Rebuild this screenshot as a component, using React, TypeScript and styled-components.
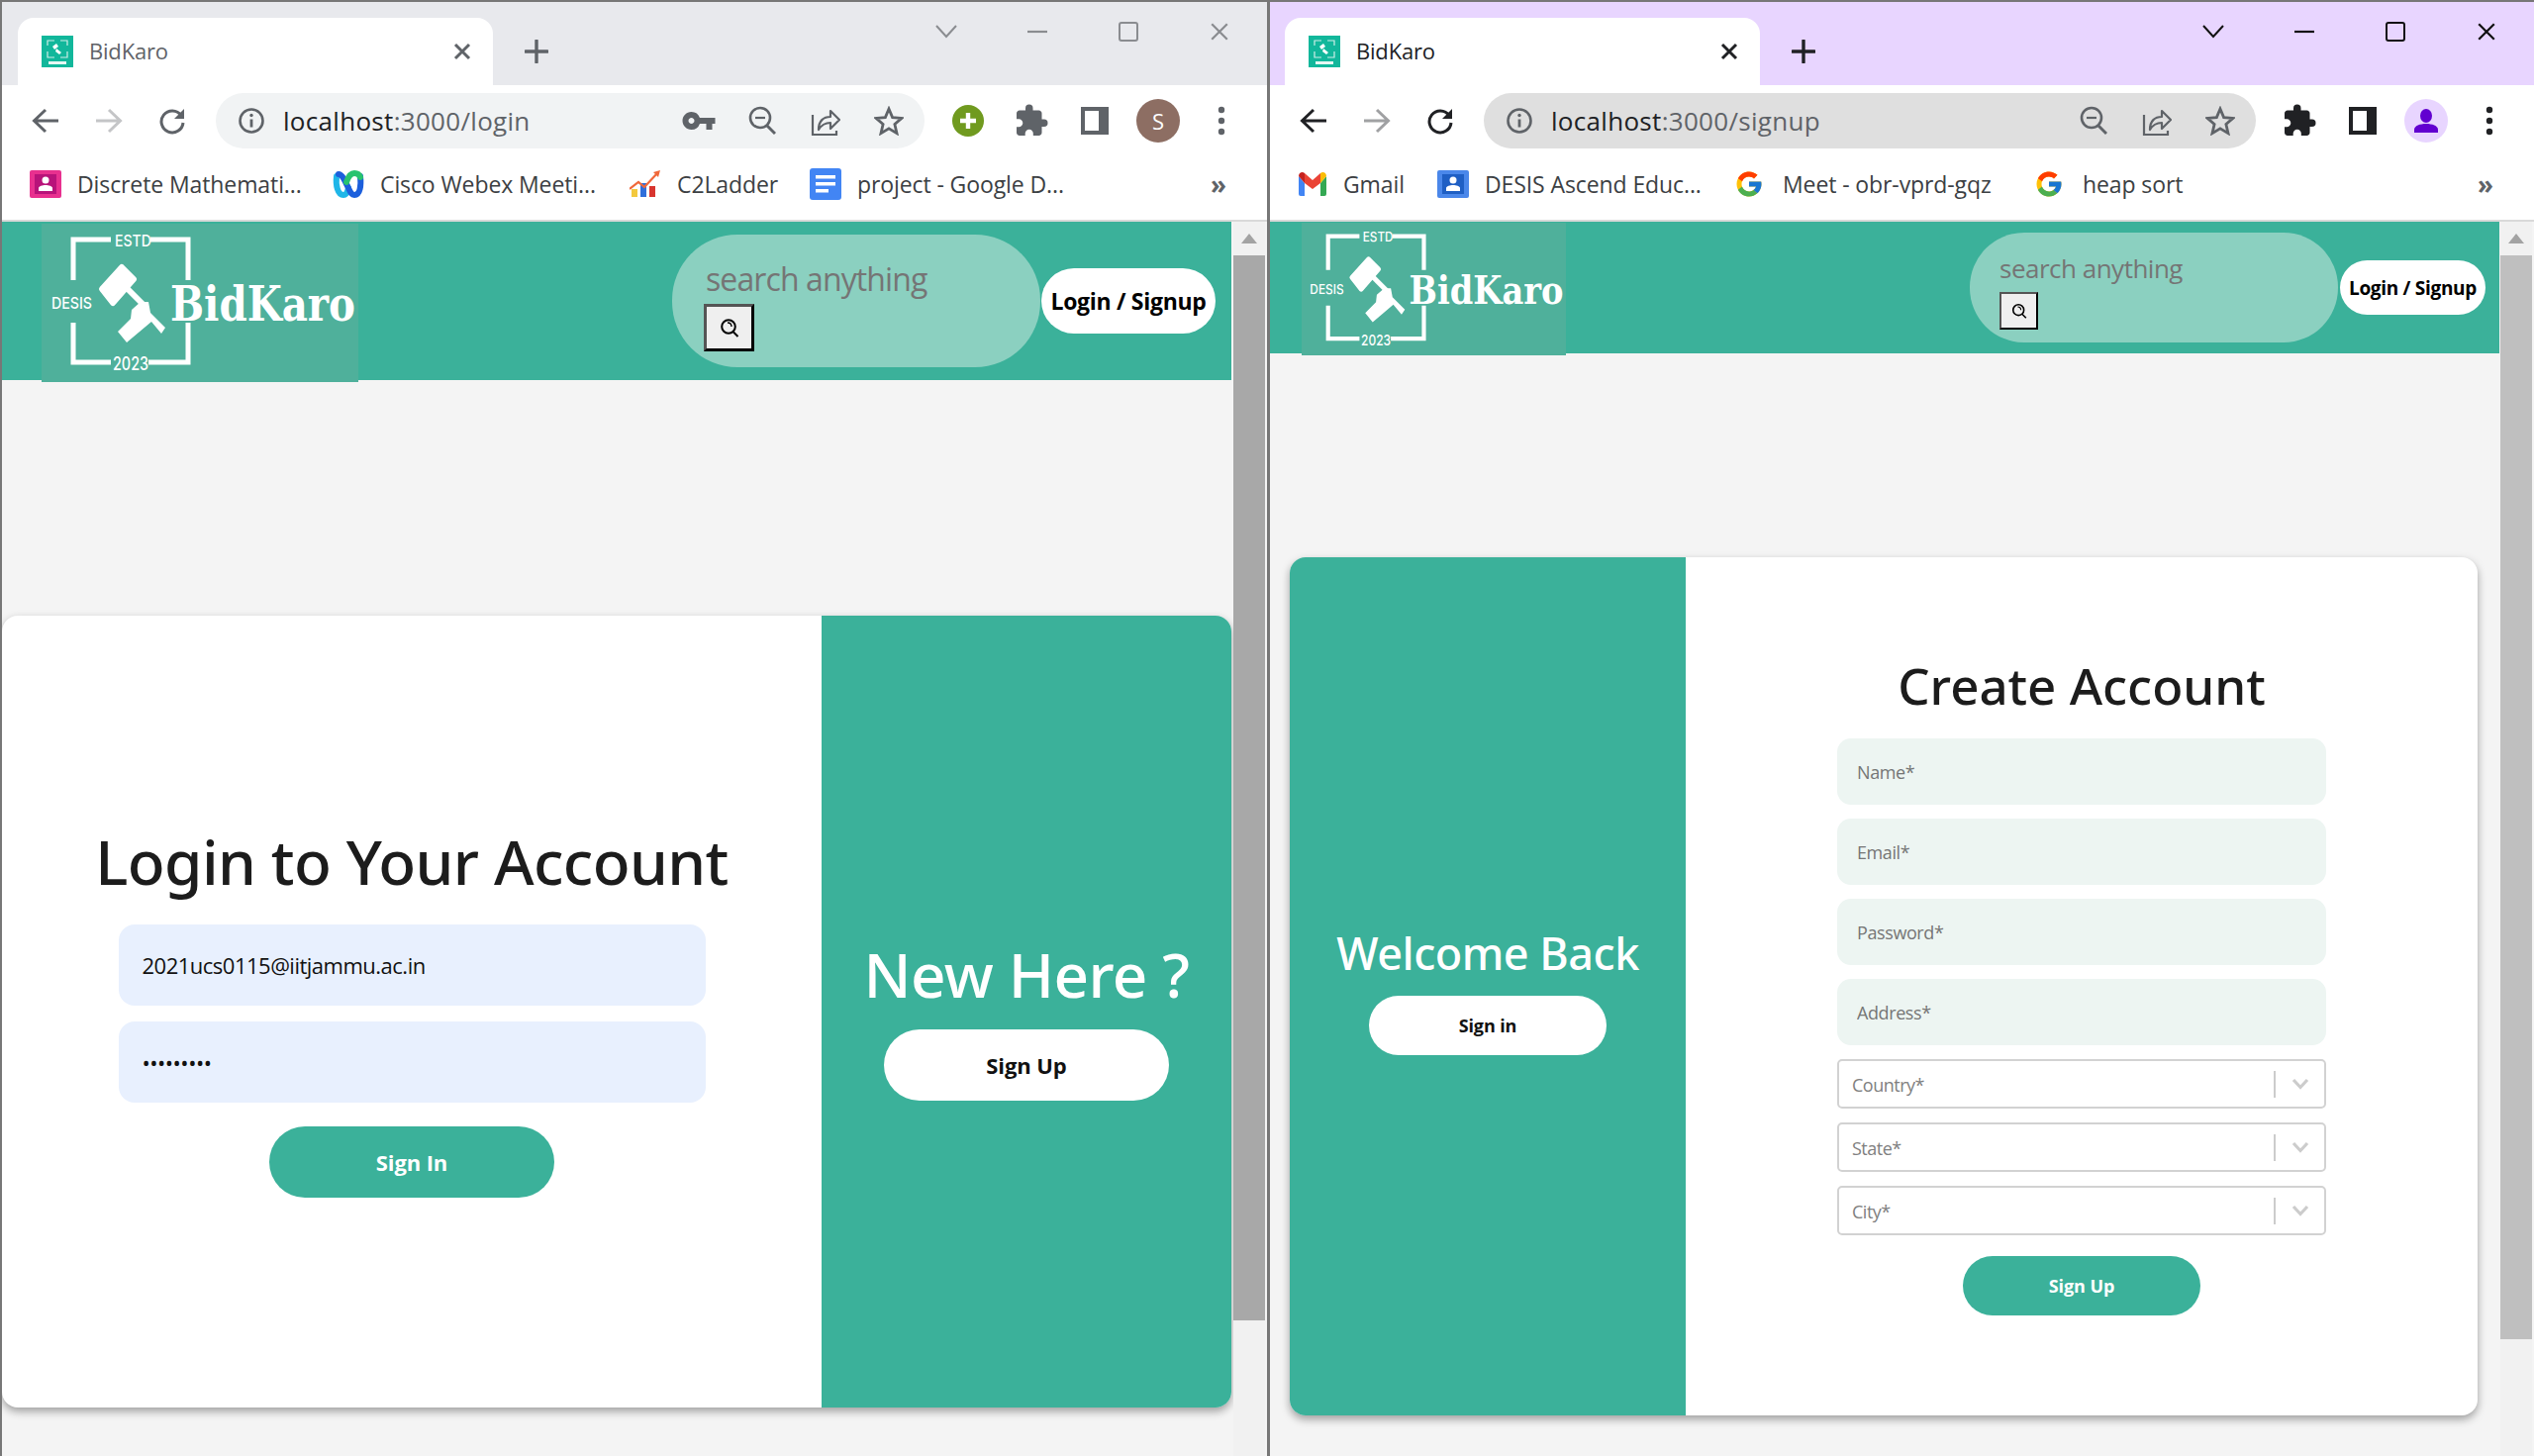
import React from 'react';
import styled, { createGlobalStyle } from 'styled-components';
import { MdExtension, MdVpnKey } from 'react-icons/md';
import { FcGoogle } from 'react-icons/fc';

const TEAL = '#3bb19a';

const GlobalStyle = createGlobalStyle`
  html, body {
    margin: 0;
    padding: 0;
    overflow: hidden;
    background: #fff;
    font-family: "Open Sans", "Noto Sans", sans-serif;
  }
  * { box-sizing: border-box; }
`;

const Desktop = styled.div`
  width: 2560px;
  height: 1471px;
  display: flex;
`;

const Win = styled.div<{ $active?: boolean }>`
  width: 1280px;
  height: 1471px;
  display: flex;
  flex-direction: column;
  flex: none;
  border-top: 2px solid #777;
  border-left: ${(p) => (p.$active ? 3 : 2)}px solid #777;
  overflow: hidden;
`;

const TabStrip = styled.div<{ $active?: boolean }>`
  height: 84px;
  flex: none;
  display: flex;
  align-items: flex-start;
  padding: 16px 0 0 ${(p) => (p.$active ? 15 : 16)}px;
  background: ${(p) => (p.$active ? '#e8d5ff' : '#e8e9ed')};
  color: ${(p) => (p.$active ? '#202124' : '#5f6368')};
`;

const Tab = styled.div`
  width: 480px;
  height: 68px;
  background: #fff;
  border-radius: 16px 16px 0 0;
  display: flex;
  align-items: center;
  padding: 0 22px 0 24px;
`;

const TabTitle = styled.span<{ $active?: boolean }>`
  margin: -2px 0 0 16px;
  font-size: 22px;
  letter-spacing: -0.2px;
  flex: 1;
  color: ${(p) => (p.$active ? '#202124' : '#5f6368')};
`;

const NewTab = styled.div`
  width: 88px;
  height: 68px;
  display: flex;
  align-items: center;
  justify-content: center;
`;

const WinControls = styled.div`
  margin-left: auto;
  margin-right: 2px;
  display: flex;
  width: 368px;
  height: 30px;
  margin-top: -1px;
  align-items: center;
`;

const ControlSlot = styled.div`
  width: 92px;
  display: flex;
  justify-content: center;
`;

const Toolbar = styled.div`
  height: 72px;
  flex: none;
  display: flex;
  align-items: center;
  padding-left: 12px;
  background: #fff;
`;

const IconSlot = styled.div`
  width: 64px;
  height: 56px;
  flex: none;
  display: flex;
  align-items: center;
  justify-content: center;
`;

const Omnibox = styled.div<{ $active?: boolean }>`
  width: ${(p) => (p.$active ? 780 : 716)}px;
  height: 56px;
  flex: none;
  margin: 0 12px;
  border-radius: 28px;
  display: flex;
  align-items: center;
  padding: 0 4px;
  background: ${(p) => (p.$active ? '#dfdfdf' : '#f1f3f4')};
`;

const Url = styled.div`
  flex: 1;
  font-size: 26px;
  letter-spacing: 0.3px;
  color: #5f6368;
`;

const UrlHost = styled.span`
  color: #202124;
`;

const Bookmarks = styled.div`
  height: 66px;
  flex: none;
  display: flex;
  align-items: center;
  padding: 0 0 8px 28px;
  background: #fff;
  border-bottom: 2px solid #d9d9d9;
`;

const Bookmark = styled.div<{ $w: number; $gap?: number }>`
  width: ${(p) => p.$w}px;
  flex: none;
  display: flex;
  align-items: center;
  gap: ${(p) => p.$gap ?? 16}px;
  color: #3c4043;
  font-size: 23px;
  letter-spacing: -0.1px;
  white-space: nowrap;
`;

const MoreChevrons = styled.div`
  margin-left: auto;
  margin-right: 41px;
  font-size: 26px;
  line-height: 26px;
  font-weight: 700;
  color: #5f6368;
`;

const Page = styled.div`
  flex: 1;
  display: flex;
  min-height: 0;
  background: #f4f4f4;
`;

const Main = styled.div`
  width: 1242px;
  flex: none;
  display: flex;
  flex-direction: column;
`;

const Header = styled.div<{ $small?: boolean }>`
  height: ${(p) => (p.$small ? 133 : 160)}px;
  flex: none;
  display: flex;
  align-items: flex-start;
  background: ${TEAL};
`;

const LogoBox = styled.div<{ $small?: boolean }>`
  width: ${(p) => (p.$small ? 267 : 320)}px;
  height: ${(p) => (p.$small ? 134 : 160)}px;
  margin: ${(p) => (p.$small ? '1px 0 0 32px' : '2px 0 0 40px')};
  flex: none;
  background: #4fb09b;
  position: relative;
  z-index: 1;
`;

const SearchPill = styled.div<{ $small?: boolean }>`
  width: 372px;
  height: ${(p) => (p.$small ? 111 : 134)}px;
  margin: ${(p) => (p.$small ? '11px 0 0 408px' : '13px 0 0 317px')};
  padding: ${(p) => (p.$small ? '16px 0 0 30px' : '21px 0 0 32px')};
  flex: none;
  background: #8bd0c0;
  border-radius: ${(p) => (p.$small ? 55 : 66)}px;
`;

const SearchInput = styled.input<{ $small?: boolean }>`
  display: block;
  width: 300px;
  height: ${(p) => (p.$small ? 40 : 46)}px;
  padding: 0 0 0 ${(p) => (p.$small ? 0 : 2)}px;
  border: 0;
  outline: 0;
  background: transparent;
  font-family: inherit;
  font-size: ${(p) => (p.$small ? 26 : 32)}px;
  letter-spacing: ${(p) => (p.$small ? -0.5 : -0.9)}px;
  &::placeholder {
    color: #757575;
    opacity: 1;
  }
`;

const SearchButton = styled.button<{ $small?: boolean }>`
  display: flex;
  align-items: center;
  justify-content: center;
  padding: 0;
  width: ${(p) => (p.$small ? 39 : 51)}px;
  height: ${(p) => (p.$small ? 38 : 48)}px;
  margin-top: ${(p) => (p.$small ? 4 : 3)}px;
  background: #efefef;
  border: ${(p) => (p.$small ? 2 : 3)}px solid #000;
  border-top-color: #555;
  border-left-color: #555;
`;

const LoginPill = styled.button<{ $small?: boolean }>`
  width: ${(p) => (p.$small ? 147 : 176)}px;
  height: ${(p) => (p.$small ? 55 : 66)}px;
  margin: ${(p) => (p.$small ? '39px 0 0 2px' : '47px 0 0 1px')};
  flex: none;
  padding: 0;
  border: 0;
  background: #fff;
  border-radius: 33px;
  color: #000;
  font-family: inherit;
  font-weight: 700;
  font-size: ${(p) => (p.$small ? 19 : 23)}px;
  letter-spacing: -0.3px;
`;

const Card = styled.div<{ $signup?: boolean }>`
  display: flex;
  flex: none;
  overflow: hidden;
  background: #fff;
  border-radius: 16px;
  box-shadow: 0 4px 8px rgba(0, 0, 0, 0.35);
  width: ${(p) => (p.$signup ? 1200 : 1242)}px;
  height: ${(p) => (p.$signup ? 867 : 800)}px;
  margin: ${(p) => (p.$signup ? '206px 0 0 20px' : '238px 0 0 0')};
`;

const FormPanel = styled.div<{ $top: number; $w?: number }>`
  display: flex;
  flex-direction: column;
  align-items: center;
  flex: ${(p) => (p.$w ? 'none' : 1)};
  width: ${(p) => (p.$w ? `${p.$w}px` : 'auto')};
  padding-top: ${(p) => p.$top}px;
`;

const GreenPanel = styled(FormPanel)`
  background: ${TEAL};
`;

const Heading = styled.h1<{ $size: number; $line: number; $white?: boolean; $track?: number }>`
  margin: 0;
  font-family: "Noto Sans", "Open Sans", sans-serif;
  font-weight: 500;
  white-space: nowrap;
  font-size: ${(p) => p.$size}px;
  line-height: ${(p) => p.$line}px;
  letter-spacing: ${(p) => p.$track ?? 0}px;
  color: ${(p) => (p.$white ? '#fff' : '#1c1c1c')};
`;

const LoginInput = styled.input`
  display: block;
  width: 593px;
  height: 82px;
  flex: none;
  padding: 0 24px;
  border: 0;
  outline: 0;
  border-radius: 16px;
  background: #e8f0fe;
  color: #111;
  font-family: inherit;
  font-size: 22px;
  letter-spacing: -0.5px;
  margin-bottom: 16px;
  &:first-of-type {
    margin-top: 24px;
  }
`;

const SignupInput = styled.input`
  display: block;
  width: 494px;
  height: 67px;
  flex: none;
  margin-top: 14px;
  padding: 0 20px;
  border: 0;
  outline: 0;
  border-radius: 14px;
  background: #edf5f2;
  font-family: inherit;
  font-size: 18px;
  letter-spacing: -0.4px;
  &:first-of-type {
    margin-top: 19px;
  }
  &::placeholder {
    color: #757575;
    opacity: 1;
  }
`;

const SelectBox = styled.div`
  width: 494px;
  height: 50px;
  flex: none;
  margin-top: 14px;
  display: flex;
  align-items: center;
  padding-left: 13px;
  border: 2px solid #d2d2d2;
  border-radius: 5px;
  background: #fff;
  color: #808080;
  font-size: 18px;
  letter-spacing: -0.5px;
`;

const SelectLabel = styled.span`
  flex: 1;
  margin-top: 2px;
`;

const SelectDivider = styled.span`
  width: 2px;
  height: 27px;
  background: #ccc;
`;

const SelectArrow = styled.span`
  width: 49px;
  display: flex;
  justify-content: center;
`;

const Pill = styled.button<{ $w: number; $h: number; $font: number; $white?: boolean; $mt: number }>`
  width: ${(p) => p.$w}px;
  height: ${(p) => p.$h}px;
  flex: none;
  margin-top: ${(p) => p.$mt}px;
  padding: 0;
  border: 0;
  border-radius: ${(p) => p.$h / 2}px;
  background: ${(p) => (p.$white ? '#fff' : TEAL)};
  color: ${(p) => (p.$white ? '#111' : '#fff')};
  font-family: inherit;
  font-weight: 700;
  font-size: ${(p) => p.$font}px;
  letter-spacing: -0.1px;
`;

const Scrollbar = styled.div<{ $active?: boolean }>`
  flex: 1;
  display: flex;
  flex-direction: column;
  align-items: center;
  padding-left: ${(p) => (p.$active ? 0 : 2)}px;
  padding-right: 2px;
`;

const ScrollTrack = styled.div`
  width: 32px;
  flex: 1;
  display: flex;
  flex-direction: column;
  background: #f1f1f1;
`;

const ScrollUp = styled.div`
  height: 34px;
  flex: none;
  display: flex;
  align-items: center;
  justify-content: center;
`;

const ScrollThumb = styled.div<{ $h: number; $c: string }>`
  height: ${(p) => p.$h}px;
  flex: none;
  background: ${(p) => p.$c};
`;

const Avatar = styled.div<{ $bg: string }>`
  width: 44px;
  height: 44px;
  border-radius: 50%;
  background: ${(p) => p.$bg};
  color: #fff;
  font-size: 22px;
  display: flex;
  align-items: center;
  justify-content: center;
`;

const Favicon = () => (
  <svg width="32" height="32" viewBox="0 0 32 32">
    <rect width="32" height="32" fill="#12b79b" />
    <path d="M6 10V5h7M19 5h7v5M6 16v6h7M19 22h7v-6" stroke="#cdeee8" strokeWidth="1.2" fill="none" />
    <path d="M11 11l4-3 2 3-4 3zM15 13l5 4-2 2-4-3z" fill="#fff" />
    <rect x="7" y="26" width="18" height="3" fill="#e5f7f3" />
  </svg>
);

const Close = ({ size = 18, color, w = 3 }: { size?: number; color: string; w?: number }) => (
  <svg width={size} height={size} viewBox="0 0 18 18">
    <path d="M2 2l14 14M16 2L2 16" stroke={color} strokeWidth={w} fill="none" />
  </svg>
);

const Plus = ({ color }: { color: string }) => (
  <svg width="24" height="24" viewBox="0 0 24 24">
    <path d="M12 1v22M1 12h22" stroke={color} strokeWidth="3.4" strokeLinecap="round" fill="none" />
  </svg>
);

const Chevron = ({ color }: { color: string }) => (
  <svg width="22" height="14" viewBox="0 0 22 14">
    <path d="M1 1l10 11L21 1" stroke={color} strokeWidth="2" fill="none" />
  </svg>
);

const Minimize = ({ color }: { color: string }) => (
  <svg width="20" height="4" viewBox="0 0 20 4">
    <path d="M0 2h20" stroke={color} strokeWidth="2.2" />
  </svg>
);

const Maximize = ({ color }: { color: string }) => (
  <svg width="20" height="20" viewBox="0 0 20 20">
    <rect x="1" y="1" width="18" height="18" rx="2" stroke={color} strokeWidth="2" fill="none" />
  </svg>
);

const Arrow = ({ color, flip }: { color: string; flip?: boolean }) => (
  <svg width="28" height="28" viewBox="0 0 28 28" style={flip ? { transform: 'scaleX(-1)' } : undefined}>
    <path d="M27 14H3M14 3L2.500 14 14 25" stroke={color} strokeWidth="3" fill="none" />
  </svg>
);

const Reload = ({ color }: { color: string }) => (
  <svg width="28" height="28" viewBox="0 0 28 28">
    <path d="M23 8.500A11 11 0 1 0 25 16" stroke={color} strokeWidth="3" fill="none" />
    <path d="M26 2v10H16z" fill={color} />
  </svg>
);

const InfoIcon = () => (
  <svg width="28" height="28" viewBox="0 0 28 28">
    <circle cx="14" cy="14" r="11.500" stroke="#5f6368" strokeWidth="2.600" fill="none" />
    <path d="M14 12.500v8" stroke="#5f6368" strokeWidth="2.800" />
    <circle cx="14" cy="8.500" r="1.700" fill="#5f6368" />
  </svg>
);

const ZoomOut = () => (
  <svg width="28" height="30" viewBox="0 0 28 30">
    <circle cx="12" cy="12" r="10" stroke="#5f6368" strokeWidth="2.600" fill="none" />
    <path d="M7 12h10" stroke="#5f6368" strokeWidth="2.200" />
    <path d="M19 20l8 8" stroke="#5f6368" strokeWidth="3" />
  </svg>
);

const Share = () => (
  <svg width="30" height="30" viewBox="0 0 30 30">
    <path d="M2 9v20h24v-4" stroke="#5f6368" strokeWidth="2.200" fill="none" />
    <path d="M8 24c0-9 5-13 12-13V5l9 9-9 9v-6c-5 0-9 2-12 7z" stroke="#5f6368" strokeWidth="2.200" strokeLinejoin="round" fill="none" />
  </svg>
);

const StarIcon = () => (
  <svg width="30" height="30" viewBox="0 0 30 30">
    <path d="M15 3l3.600 8.600 9.400.8-7.100 6.100 2.100 9.100L15 22.800l-8 4.800 2.100-9.100L2 12.400l9.400-.8z" stroke="#5f6368" strokeWidth="2.800" fill="none" />
  </svg>
);

const GreenPlus = () => (
  <svg width="32" height="32" viewBox="0 0 32 32">
    <circle cx="16" cy="16" r="16" fill="#709a1f" />
    <path d="M16 8v16M8 16h16" stroke="#fff" strokeWidth="4.400" />
  </svg>
);

const SidePanel = ({ color }: { color: string }) => (
  <svg width="28" height="28" viewBox="0 0 28 28">
    <rect width="28" height="28" fill={color} />
    <rect x="4" y="4" width="14" height="20" fill="#fff" />
  </svg>
);

const Dots = ({ color }: { color: string }) => (
  <svg width="8" height="30" viewBox="0 0 8 30">
    <circle cx="4" cy="4" r="3.200" fill={color} />
    <circle cx="4" cy="15" r="3.200" fill={color} />
    <circle cx="4" cy="26" r="3.200" fill={color} />
  </svg>
);

const PersonIcon = () => (
  <svg width="26" height="26" viewBox="0 0 26 26">
    <ellipse cx="13" cy="8" rx="6" ry="7" fill="#6200d0" />
    <path d="M1 25v-3c0-4 6-6 12-6s12 2 12 6v3z" fill="#6200d0" />
  </svg>
);

const ContactIcon = ({ bg, inner }: { bg: string; inner: string }) => (
  <svg width="32" height="28" viewBox="0 0 32 28">
    <rect width="32" height="28" rx="2" fill={bg} />
    <rect x="5" y="4" width="22" height="20" fill={inner} />
    <circle cx="16" cy="10" r="3.500" fill="#fff" />
    <path d="M9 21v-3c0-2 4-3 7-3s7 1 7 3v3z" fill="#fff" />
  </svg>
);

const WebexIcon = () => (
  <svg width="32" height="30" viewBox="0 0 32 30">
    <path d="M4 7c-1 9 1 19 7 19 3 0 4-3 5-7" stroke="#1fb6e8" strokeWidth="6" strokeLinecap="round" fill="none" />
    <path d="M6 5c4 0 7 8 10 14 2 4 3 7 6 7 6 0 7-10 6-19" stroke="#1c5fdc" strokeWidth="6" strokeLinecap="round" fill="none" />
    <path d="M14 13c2-6 4-9 8-9 3 0 5 1 6 4" stroke="#28c36f" strokeWidth="6" strokeLinecap="round" fill="none" />
  </svg>
);

const LadderIcon = () => (
  <svg width="32" height="30" viewBox="0 0 32 30">
    <rect x="2" y="20" width="6" height="8" fill="#f3c93e" />
    <rect x="11" y="14" width="6" height="14" fill="#2f6fdb" />
    <rect x="20" y="17" width="6" height="11" fill="#d8352f" />
    <path d="M0 20l9-7 6 5L29 3" stroke="#f0683a" strokeWidth="2.200" fill="none" />
    <path d="M24 3l7-2-2 7z" fill="#f0683a" />
  </svg>
);

const DocsIcon = () => (
  <svg width="32" height="32" viewBox="0 0 32 32">
    <rect width="32" height="32" rx="3" fill="#4285f4" />
    <path d="M6 7h20v3.500H6zM6 14h20v3.500H6zM6 21h13v3.500H6z" fill="#fff" />
  </svg>
);

const GmailIcon = () => (
  <svg width="30" height="26" viewBox="0 0 30 26">
    <path d="M1 5v18a2 2 0 0 0 2 2h4V12z" fill="#4285f4" />
    <path d="M29 5v18a2 2 0 0 1-2 2h-4V12z" fill="#34a853" />
    <path d="M1 5c0-4 4-5 6-3v10z" fill="#c5221f" />
    <path d="M29 5c0-4-4-5-6-3v10z" fill="#fbbc04" />
    <path d="M7 2l8 7 8-7v10l-8 6-8-6z" fill="#ea4335" />
  </svg>
);

const SearchGlyph = ({ size }: { size: number }) => (
  <svg width={size} height={size} viewBox="0 0 20 20">
    <circle cx="9" cy="9" r="6.800" stroke="#000" strokeWidth="2" fill="none" />
    <path d="M8 5c2 0 4 1.400 4 4" stroke="#000" strokeWidth="1.400" fill="none" />
    <path d="M13.500 14l5 5" stroke="#000" strokeWidth="2" />
  </svg>
);

const SelectChevron = () => (
  <svg width="18" height="12" viewBox="0 0 18 12">
    <path d="M2 2l7 7.500L16 2" stroke="#ccc" strokeWidth="3.200" fill="none" />
  </svg>
);

const ScrollArrow = () => (
  <svg width="16" height="10" viewBox="0 0 16 10">
    <path d="M8 0l8 10H0z" fill="#a3a3a3" />
  </svg>
);

const Logo = ({ width, height }: { width: number; height: number }) => (
  <svg width={width} height={height} viewBox="0 0 320 160" fill="#fff" overflow="visible">
    <path d="M32 57V16h38M110 16h38v41M32 100v40h38M108 140h40v-40" stroke="#fff" strokeWidth="5" fill="none" />
    <text x="74" y="23" fontFamily="Inter" fontWeight="500" fontSize="16" textLength="37" lengthAdjust="spacingAndGlyphs">ESTD</text>
    <text x="10" y="86" fontFamily="Inter" fontWeight="500" fontSize="16" textLength="41" lengthAdjust="spacingAndGlyphs">DESIS</text>
    <text x="72" y="148" fontFamily="Inter" fontWeight="500" fontSize="18" textLength="36" lengthAdjust="spacingAndGlyphs">2023</text>
    <path d="M61 66L81 44 93 56 72 80z" stroke="#fff" strokeWidth="6" strokeLinejoin="round" />
    <path d="M86 65l20 20" stroke="#fff" strokeWidth="6" />
    <path d="M77 109l9 11 25-21 10 12 4-6-15-15-2-11h-8l-9 8-1 9z" />
    <text x="130" y="98" fontFamily="DejaVu Serif" fontWeight="700" fontSize="48" textLength="187" lengthAdjust="spacingAndGlyphs">BidKaro</text>
  </svg>
);

interface BookmarkItem {
  label: string;
  icon: React.ReactNode;
  w: number;
  gap?: number;
}

interface ChromeProps {
  active?: boolean;
  path: string;
  bookmarks: BookmarkItem[];
  children: React.ReactNode;
  thumb: number;
  thumbColor: string;
  small?: boolean;
}

const BrowserWindow = ({ active, path, bookmarks, children, thumb, thumbColor, small }: ChromeProps) => {
  const ink = active ? '#202124' : '#5f6368';
  const ctl = active ? '#111' : '#8a8c90';
  return (
    <Win $active={active}>
      <TabStrip $active={active}>
        <Tab>
          <Favicon />
          <TabTitle $active={active}>BidKaro</TabTitle>
          <Close color={ink} />
        </Tab>
        <NewTab>
          <Plus color={ink} />
        </NewTab>
        <WinControls>
          <ControlSlot><Chevron color={ctl} /></ControlSlot>
          <ControlSlot><Minimize color={ctl} /></ControlSlot>
          <ControlSlot><Maximize color={ctl} /></ControlSlot>
          <ControlSlot><Close size={20} w={2} color={ctl} /></ControlSlot>
        </WinControls>
      </TabStrip>
      <Toolbar>
        <IconSlot><Arrow color={ink} /></IconSlot>
        <IconSlot><Arrow flip color={active ? '#a0a1a3' : '#c4c5c7'} /></IconSlot>
        <IconSlot><Reload color={ink} /></IconSlot>
        <Omnibox $active={active}>
          <IconSlot><InfoIcon /></IconSlot>
          <Url><UrlHost>localhost</UrlHost>:3000/{path}</Url>
          {!active && <IconSlot><MdVpnKey size={36} color="#5f6368" /></IconSlot>}
          <IconSlot><ZoomOut /></IconSlot>
          <IconSlot><Share /></IconSlot>
          <IconSlot><StarIcon /></IconSlot>
        </Omnibox>
        {!active && <IconSlot><GreenPlus /></IconSlot>}
        <IconSlot><MdExtension size={36} color={ink} /></IconSlot>
        <IconSlot><SidePanel color={ink} /></IconSlot>
        <IconSlot>
          {active ? <Avatar $bg="#e8d5ff"><PersonIcon /></Avatar> : <Avatar $bg="#8d6e63">S</Avatar>}
        </IconSlot>
        <IconSlot><Dots color={ink} /></IconSlot>
      </Toolbar>
      <Bookmarks>
        {bookmarks.map((b) => (
          <Bookmark key={b.label} $w={b.w} $gap={b.gap}>
            {b.icon}
            {b.label}
          </Bookmark>
        ))}
        <MoreChevrons>»</MoreChevrons>
      </Bookmarks>
      <Page>
        <Main>
          <Header $small={small}>
            <LogoBox $small={small}>
              <Logo width={small ? 267 : 320} height={small ? 134 : 160} />
            </LogoBox>
            <SearchPill $small={small}>
              <SearchInput $small={small} placeholder="search anything" />
              <SearchButton $small={small}>
                <SearchGlyph size={small ? 16 : 20} />
              </SearchButton>
            </SearchPill>
            <LoginPill $small={small}>Login / Signup</LoginPill>
          </Header>
          {children}
        </Main>
        <Scrollbar $active={active}>
          <ScrollTrack>
            <ScrollUp><ScrollArrow /></ScrollUp>
            <ScrollThumb $h={thumb} $c={thumbColor} />
          </ScrollTrack>
        </Scrollbar>
      </Page>
    </Win>
  );
};

const loginBookmarks: BookmarkItem[] = [
  { label: 'Discrete Mathemati...', icon: <ContactIcon bg="#e8308f" inner="#b8137a" />, w: 306 },
  { label: 'Cisco Webex Meeti...', icon: <WebexIcon />, w: 300 },
  { label: 'C2Ladder', icon: <LadderIcon />, w: 182 },
  { label: 'project - Google D...', icon: <DocsIcon />, w: 300 },
];

const signupBookmarks: BookmarkItem[] = [
  { label: 'Gmail', icon: <GmailIcon />, w: 141 },
  { label: 'DESIS Ascend Educ...', icon: <ContactIcon bg="#4a87ea" inner="#1f5fc4" />, w: 300 },
  { label: 'Meet - obr-vprd-gqz', icon: <FcGoogle size={30} />, w: 303, gap: 19 },
  { label: 'heap sort', icon: <FcGoogle size={30} />, w: 200, gap: 19 },
];

const SelectField = ({ label }: { label: string }) => (
  <SelectBox>
    <SelectLabel>{label}</SelectLabel>
    <SelectDivider />
    <SelectArrow><SelectChevron /></SelectArrow>
  </SelectBox>
);

const App = () => (
  <Desktop>
    <GlobalStyle />
    <BrowserWindow path="login" bookmarks={loginBookmarks} thumb={1076} thumbColor="#a8a8a8">
      <Card>
        <FormPanel $w={828} $top={208}>
          <Heading $size={62} $line={80} $track={-0.6}>Login to Your Account</Heading>
          <LoginInput defaultValue="2021ucs0115@iitjammu.ac.in" readOnly />
          <LoginInput type="password" defaultValue="123456789" readOnly />
          <Pill $w={288} $h={72} $font={22} $mt={8}>Sign In</Pill>
        </FormPanel>
        <GreenPanel $top={322}>
          <Heading $size={62} $line={80} $white $track={-0.6}>New Here ?</Heading>
          <Pill $w={288} $h={72} $font={22} $mt={16} $white>Sign Up</Pill>
        </GreenPanel>
      </Card>
    </BrowserWindow>
    <BrowserWindow active small path="signup" bookmarks={signupBookmarks} thumb={1095} thumbColor="#bfbfbf">
      <Card $signup>
        <GreenPanel $w={400} $top={370}>
          <Heading $size={45} $line={60} $white $track={-0.5}>Welcome Back</Heading>
          <Pill $w={240} $h={60} $font={18} $mt={13} $white>Sign in</Pill>
        </GreenPanel>
        <FormPanel $top={94}>
          <Heading $size={51} $line={70}>Create Account</Heading>
          <SignupInput placeholder="Name*" />
          <SignupInput placeholder="Email*" />
          <SignupInput placeholder="Password*" />
          <SignupInput placeholder="Address*" />
          <SelectField label="Country*" />
          <SelectField label="State*" />
          <SelectField label="City*" />
          <Pill $w={240} $h={60} $font={18} $mt={21}>Sign Up</Pill>
        </FormPanel>
      </Card>
    </BrowserWindow>
  </Desktop>
);

export default App;
